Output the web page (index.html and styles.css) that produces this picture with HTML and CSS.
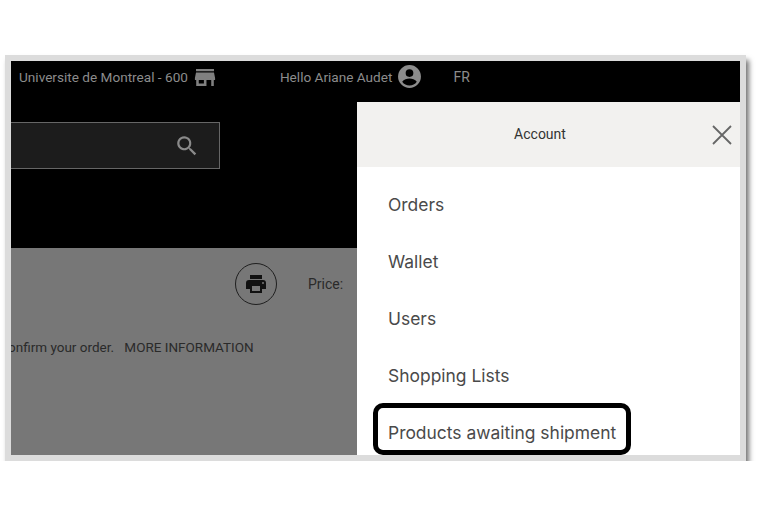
FILE: index.html
```html
<!DOCTYPE html>
<html lang="en">
<head>
    <meta charset="UTF-8">
    <meta name="viewport" content="width=device-width, initial-scale=1.0">
    <title>Account menu</title>
    <link rel="stylesheet" href="styles.css">
</head>
<body>
    <div class="frame">
        <div class="topbar">
            <span class="store">Universite de Montreal - 600</span>
            <svg class="store-icon" viewBox="0 0 24 24" width="22" height="22"><path d="M2.2 3.2h19.6v2.4H2.2zM2.2 7h19.6L23 13v2.2h-1.4v6.6h-2.8v-6.6h-5.2v6.6H2.4v-6.6H1V13zM5.200 15.200v4h5.600v-4z"/></svg>
            <span class="hello">Hello Ariane Audet</span>
            <svg class="user-icon" viewBox="0 0 24 24" width="25" height="25"><path d="M12 1a11 11 0 1 0 0 22 11 11 0 0 0 0-22zm0 4a3.700 3.700 0 1 1 0 7.400 3.700 3.700 0 0 1 0-7.400zm0 15.600a8.600 8.600 0 0 1-7-3.600c1.500-2 4.600-3 7-3s5.500 1 7 3a8.600 8.600 0 0 1-7 3.600z"/></svg>
            <span class="lang">FR</span>
        </div>
        <div class="body">
            <div class="page">
                <div class="head">
                    <div class="search">
                        <svg viewBox="0 0 24 24" width="26" height="26"><path d="M15.500 14h-.8l-.3-.3A6.500 6.500 0 1 0 13.700 14.400l.3.3v.8l5 5 1.500-1.500zm-6 0a4.500 4.500 0 1 1 0-9 4.500 4.500 0 0 1 0 9z"/></svg>
                    </div>
                </div>
                <div class="tools">
                    <div class="print">
                        <svg viewBox="0 0 24 24" width="24" height="24"><path d="M19 8H5a3 3 0 0 0-3 3v6h4v4h12v-4h4v-6a3 3 0 0 0-3-3zm-3 11H8v-5h8zm3-7a1 1 0 1 1 0-2 1 1 0 0 1 0 2zM18 3H6v4h12z"/></svg>
                    </div>
                    <span class="price">Price:</span>
                </div>
                <div class="notice">
                    <span class="confirm">onfirm your order.</span>
                    <span>MORE INFORMATION</span>
                </div>
            </div>
            <div class="panel">
                <div class="panel-head">
                    <span>Account</span>
                    <svg class="close" viewBox="0 0 20 20" width="20" height="20"><path d="M1 1l18 18M19 1L1 19"/></svg>
                </div>
                <ul class="menu">
                    <li>Orders</li>
                    <li>Wallet</li>
                    <li>Users</li>
                    <li>Shopping Lists</li>
                    <li>Products awaiting shipment</li>
                </ul>
                <div class="highlight"></div>
            </div>
        </div>
    </div>
</body>
</html>
```

FILE: styles.css
```css
body {
    margin: 0;
    background-color: white;
    font-family: Roboto, "Liberation Sans", sans-serif;
}
.frame {
    width: 729px;
    height: 394px;
    margin: 55px 0 0 5px;
    border: 6px solid #dcdcdc;
    box-shadow: 3px 5px 5px rgba(0,0,0,0.55);
    display: flex;
    flex-direction: column;
    overflow: hidden;
}
.topbar {
    height: 41px;
    flex-shrink: 0;
    background-color: black;
    color: #8c8c8c;
    font-size: 13.6px;
    display: flex;
    align-items: center;
    padding: 0 0 10px 8px;
    box-sizing: border-box;
}
.store-icon {
    fill: #808080;
    margin-left: 6px;
}
.hello {
    margin-left: 64px;
}
.user-icon {
    fill: #8c8c8c;
    margin-left: 5px;
}
.lang {
    margin-left: 31px;
    font-size: 14px;
}
.body {
    flex: 1;
    display: flex;
    min-height: 0;
}
.page {
    width: 346px;
    flex-shrink: 0;
    background-color: #777;
}
.head {
    height: 146px;
    background-color: black;
    padding-top: 20px;
    box-sizing: border-box;
}
.search {
    width: 209px;
    height: 47px;
    box-sizing: border-box;
    background-color: #1c1c1c;
    border: 1px solid #666;
    border-left: none;
    display: flex;
    align-items: center;
    justify-content: flex-end;
    padding-right: 19px;
}
.search svg {
    fill: #8a8a8a;
}
.tools {
    display: flex;
    align-items: center;
    height: 72px;
    padding-left: 224px;
    box-sizing: border-box;
}
.print {
    width: 42px;
    height: 42px;
    box-sizing: border-box;
    border: 1px solid #1f1f1f;
    border-radius: 50%;
    display: flex;
    align-items: center;
    justify-content: center;
}
.print svg {
    fill: #111;
}
.price {
    margin-left: 31px;
    font-size: 14px;
    color: #2a2a2a;
}
.notice {
    font-size: 13.5px;
    color: #2a2a2a;
    white-space: nowrap;
    overflow: hidden;
    padding-top: 19px;
    text-indent: -3px;
}
.confirm {
    margin-right: 7px;
}
.panel {
    flex: 1;
    position: relative;
    background-color: white;
}
.panel-head {
    height: 65px;
    box-sizing: border-box;
    background-color: #f2f1ef;
    color: #333;
    font-size: 14px;
    display: flex;
    align-items: center;
    padding: 0 17px 2px 0;
    justify-content: center;
    position: relative;
}
.close {
    position: absolute;
    right: 8px;
    top: 23px;
    fill: none;
    stroke: #666;
    stroke-width: 1.8;
}
.menu {
    list-style: none;
    margin: 0;
    padding: 21px 0 0 31px;
    font-family: Inter, sans-serif;
    font-size: 17.45px;
    color: #4a4a4a;
}
.menu li {
    height: 57px;
    line-height: 33px;
}
.highlight {
    position: absolute;
    left: 16px;
    top: 301px;
    width: 258px;
    height: 52px;
    box-sizing: border-box;
    border: 5px solid black;
    border-radius: 10px;
}
```
